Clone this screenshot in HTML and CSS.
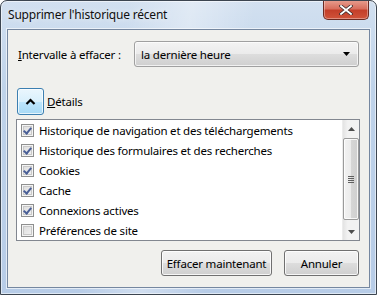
FILE: index.html
```html
<!DOCTYPE html>
<html lang="fr">
<head>
<meta charset="utf-8">
<title>Supprimer l'historique récent</title>
<link rel="stylesheet" href="styles.css">
</head>
<body>
<div class="window">
  <div class="titlebar">
    <span class="title">Supprimer l'historique récent</span>
    <div class="close">
      <svg width="14" height="10" viewBox="0 0 14 10"><path d="M2 1 L12 9 M12 1 L2 9" stroke="#3a2a2a" stroke-width="3.4" stroke-linecap="square"/><path d="M2 1 L12 9 M12 1 L2 9" stroke="#ffffff" stroke-width="1.8" stroke-linecap="square"/></svg>
    </div>
  </div>
  <div class="client">
    <div class="range-row">
      <span class="range-label"><u>I</u>ntervalle à effacer :</span>
      <div class="select">
        <span class="select-text">la dernière heure</span>
        <svg class="select-arrow" width="7" height="4" viewBox="0 0 7 4"><path d="M0 0 H7 L3.5 4 Z" fill="#000"/></svg>
      </div>
    </div>
    <div class="details-row">
      <div class="toggle">
        <svg width="11" height="7" viewBox="0 0 11 7"><path d="M1.5 6 L5.5 2 L9.5 6" fill="none" stroke="#000" stroke-width="2.2"/></svg>
      </div>
      <span class="details-label"><u>D</u>étails</span>
    </div>
    <div class="listbox">
      <ul class="items">
        <li class="item"><span class="cb checked"></span>Historique de navigation et des téléchargements</li>
        <li class="item"><span class="cb checked"></span>Historique des formulaires et des recherches</li>
        <li class="item"><span class="cb checked"></span>Cookies</li>
        <li class="item"><span class="cb checked"></span>Cache</li>
        <li class="item"><span class="cb checked"></span>Connexions actives</li>
        <li class="item"><span class="cb"></span>Préférences de site</li>
      </ul>
      <div class="scrollbar">
        <div class="sb-arrow"><svg width="7" height="4" viewBox="0 0 7 4"><path d="M0 4 H7 L3.5 0 Z" fill="#4d4d4d"/></svg></div>
        <div class="sb-track">
          <div class="sb-thumb">
            <span class="grip"></span><span class="grip"></span><span class="grip"></span><span class="grip"></span>
          </div>
        </div>
        <div class="sb-arrow"><svg width="7" height="4" viewBox="0 0 7 4"><path d="M0 0 H7 L3.5 4 Z" fill="#4d4d4d"/></svg></div>
      </div>
    </div>
    <div class="buttons">
      <div class="btn btn-clear">Effacer maintenant</div>
      <div class="btn btn-cancel">Annuler</div>
    </div>
  </div>
</div>
</body>
</html>
```
FILE: styles.css
```css
* { box-sizing: border-box; }
html, body { margin: 0; padding: 0; }
body {
  width: 377px;
  height: 295px;
  background: #ffffff;
  font-family: "Noto Sans", "Open Sans", sans-serif;
  font-size: 11.5px;
  letter-spacing: -0.2px;
  color: #000;
}
.window {
  width: 377px;
  height: 295px;
  border: 1px solid #3c4550;
  border-radius: 7px 7px 0 0;
  background:
    linear-gradient(100deg, rgba(255,255,255,0) 30%, rgba(255,255,255,0.35) 45%, rgba(255,255,255,0) 60%),
    linear-gradient(180deg, #d2e0f0 0%, #bfd3ea 30%, #b7cce7 100%);
  box-shadow: inset 0 0 0 1px rgba(255,255,255,0.55);
  display: flex;
  flex-direction: column;
  overflow: hidden;
}
.titlebar {
  height: 28px;
  display: flex;
  align-items: flex-start;
  padding-left: 7px;
}
.title {
  margin-top: 5px;
  font-size: 12px;
  letter-spacing: -0.2px;
  color: #101010;
  text-shadow: 0 0 6px rgba(255,255,255,0.9);
}
.close {
  margin-left: auto;
  margin-right: 7px;
  margin-top: -1px;
  width: 46px;
  height: 20px;
  border: 1px solid #6b2a22;
  border-top: none;
  border-radius: 0 0 5px 5px;
  background: linear-gradient(180deg, #e8a091 0%, #d86f5e 45%, #c43f2a 55%, #d0533a 100%);
  box-shadow: inset 0 0 0 1px rgba(255,255,255,0.35);
  display: flex;
  align-items: center;
  justify-content: center;
}
.client {
  flex: 1;
  margin: 0 6px 6px 6px;
  border: 1px solid #7587a0;
  box-shadow: 0 0 0 1px rgba(255,255,255,0.6);
  background: #f0f0ed;
  padding: 0 9px 11px 8px;
  display: flex;
  flex-direction: column;
}
.range-row {
  margin-top: 11px;
  display: flex;
  align-items: center;
}
.range-label {
  width: 118px;
  padding-left: 2px;
}
.select {
  width: 225px;
  height: 26px;
  border: 1px solid #a0a0a0;
  border-radius: 3px;
  background: linear-gradient(180deg, #f3f3f3 0%, #ebebeb 50%, #dddddd 51%, #cfcfcf 100%);
  box-shadow: inset 0 0 0 1px rgba(255,255,255,0.7);
  display: flex;
  align-items: center;
  padding: 0 8px 0 6px;
}
.select-text { flex: 1; }
.select-arrow { display: block; }
.details-row {
  margin-top: 21px;
  display: flex;
  align-items: center;
}
.toggle {
  margin-left: 1px;
  width: 27px;
  height: 27px;
  border: 1px solid #3c7fb1;
  border-radius: 3px;
  background: linear-gradient(180deg, #eaf6fd 0%, #d9f0fc 50%, #bee6fd 51%, #a7d9f5 100%);
  box-shadow: inset 0 0 0 1px rgba(255,255,255,0.7);
  display: flex;
  align-items: center;
  justify-content: center;
}
.toggle svg { display: block; }
.details-label { margin-left: 3px; }
.listbox {
  margin-top: 4px;
  height: 122px;
  border: 1px solid #828790;
  background: #ffffff;
  display: flex;
}
.items {
  list-style: none;
  margin: 0;
  padding: 0;
  flex: 1;
}
.item {
  height: 20px;
  display: flex;
  align-items: center;
  padding-left: 4px;
  white-space: nowrap;
}
.cb {
  width: 13px;
  height: 13px;
  margin-right: 5px;
  border: 1px solid #8e8f8f;
  background: linear-gradient(135deg, #d9d9d9 0%, #f5f5f5 100%);
  box-shadow: inset 0 0 0 1px #f4f4f4, inset 0 0 0 2px #c8c8c8;
  position: relative;
}
.cb.checked::after {
  content: "";
  position: absolute;
  left: 3px;
  top: 1px;
  width: 3px;
  height: 6px;
  border-right: 2px solid #4a5f97;
  border-bottom: 2px solid #4a5f97;
  transform: rotate(40deg);
}
.scrollbar {
  width: 17px;
  display: flex;
  flex-direction: column;
  background: linear-gradient(90deg, #e3e3e3 0%, #f2f2f2 30%, #f2f2f2 100%);
  border-left: 1px solid #ececec;
}
.sb-arrow {
  height: 17px;
  display: flex;
  align-items: center;
  justify-content: center;
}
.sb-arrow svg { display: block; }
.sb-track {
  flex: 1;
  padding: 1px 0;
}
.sb-thumb {
  height: 82px;
  border: 1px solid #9a9a9a;
  border-radius: 2px;
  background: linear-gradient(90deg, #f2f2f2 0%, #ebebeb 50%, #d6d6d6 51%, #cfcfcf 100%);
  box-shadow: inset 0 0 0 1px rgba(255,255,255,0.8);
  display: flex;
  flex-direction: column;
  align-items: center;
  justify-content: center;
  gap: 1px;
}
.grip {
  width: 6px;
  height: 1px;
  background: #5f5f5f;
}
.buttons {
  margin-top: 9px;
  display: flex;
  justify-content: flex-end;
  gap: 12px;
  padding-right: 1px;
}
.btn {
  height: 26px;
  border: 1px solid #707070;
  border-radius: 3px;
  background: linear-gradient(180deg, #f2f2f2 0%, #ebebeb 50%, #dddddd 51%, #cfcfcf 100%);
  box-shadow: inset 0 0 0 1px rgba(255,255,255,0.8);
  display: flex;
  align-items: center;
  justify-content: center;
}
.btn-clear { width: 111px; }
.btn-cancel { width: 75px; }
```
